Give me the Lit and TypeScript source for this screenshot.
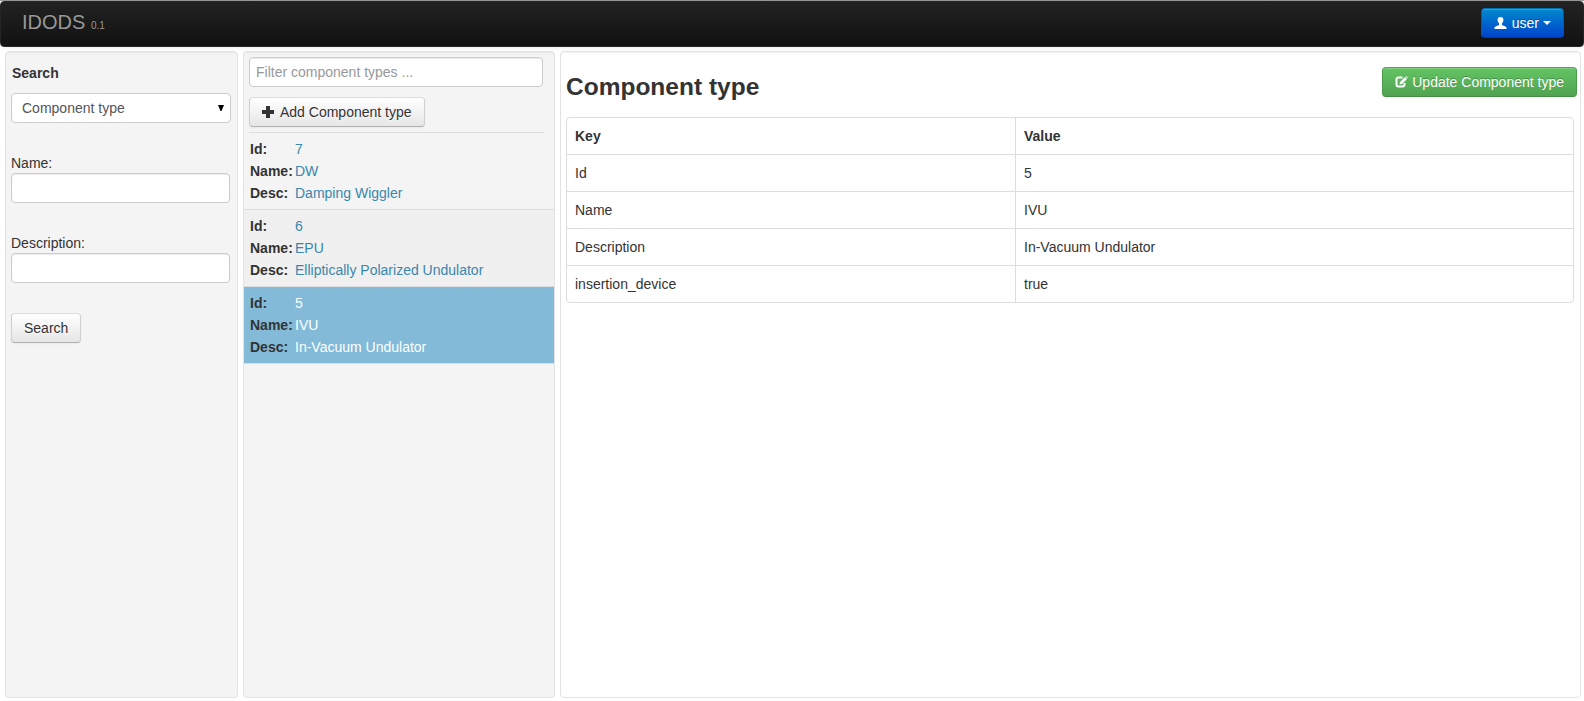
import { LitElement, html, css, svg } from "lit";
import { customElement, state } from "lit/decorators.js";

interface ComponentType {
  id: number;
  name: string;
  desc: string;
}

const TYPES: ComponentType[] = [
  { id: 7, name: "DW", desc: "Damping Wiggler" },
  { id: 6, name: "EPU", desc: "Elliptically Polarized Undulator" },
  { id: 5, name: "IVU", desc: "In-Vacuum Undulator" },
];

const plusIcon = svg`<path fill="#333" d="M4 0h4v4h4v4H8v4H4V8H0V4h4z"/>`;

@customElement("app-root")
export class AppRoot extends LitElement {
  @state() private selected = 5;

  static styles = css`
    :host {
      display: flex;
      flex-direction: column;
      box-sizing: border-box;
      height: 701px;
      background: #fff;
      color: #333;
      font: 14px/20px "Liberation Sans", Arial, sans-serif;
    }
    * { box-sizing: border-box; }
    .topline { height: 1px; background: #999; flex: none; }
    .navbar {
      flex: none;
      display: flex;
      align-items: flex-start;
      justify-content: space-between;
      height: 46px;
      padding: 6px 19px 0 21px;
      border: 1px solid #252525;
      border-radius: 4px;
      background: linear-gradient(#222, #111);
      box-shadow: 0 1px 4px rgba(0, 0, 0, 0.07);
    }
    .brand {
      font-size: 20px;
      line-height: 20px;
      padding-top: 4px;
      color: #999;
      text-shadow: 0 -1px 0 rgba(0, 0, 0, 0.25);
    }
    .brand small { font-size: 10px; }
    .btn {
      display: inline-flex;
      align-items: center;
      height: 30px;
      padding: 0 12px;
      font: inherit;
      color: #333;
      border: 1px solid;
      border-color: #dcdcdc #cfcfcf #b3b3b3;
      border-radius: 4px;
      background: linear-gradient(#fff, #e6e6e6);
      text-shadow: 0 1px 1px rgba(255, 255, 255, 0.75);
      box-shadow: inset 0 1px 0 rgba(255, 255, 255, 0.2), 0 1px 2px rgba(0, 0, 0, 0.05);
      white-space: nowrap;
    }
    .btn svg { display: block; flex: none; }
    .primary, .success {
      color: #fff;
      text-shadow: 0 -1px 0 rgba(0, 0, 0, 0.25);
    }
    .primary {
      background: linear-gradient(#08c, #04c);
      border-color: #0370b4 #0355b4 #003aa8;
    }
    .primary .caret { margin-left: 4px; }
    .primary .person { margin-right: 5px; }
    .success {
      background: linear-gradient(#62c462, #51a351);
      border-color: #53a853 #4a9a4a #458b45;
    }
    .success svg { margin-right: 4px; }
    .add svg { margin-right: 6px; }
    .columns {
      flex: none;
      display: grid;
      grid-template-columns: 233px 312px 1021px;
      gap: 5px;
      height: 647px;
      margin: 4px 0 0 5px;
    }
    .panel {
      border: 1px solid #e3e3e3;
      border-radius: 4px;
      background: #f4f4f4;
      box-shadow: inset 0 1px 1px rgba(0, 0, 0, 0.05);
      min-width: 0;
    }
    .white { background: #fff; padding: 0 4px 0 5px; }
    .search { padding: 11px 6px 0 5px; display: flex; flex-direction: column; align-items: flex-start; }
    .title { font-weight: bold; padding-left: 1px; }
    .field {
      display: flex;
      align-items: center;
      height: 30px;
      width: 219px;
      border: 1px solid #ccc;
      border-radius: 4px;
      background: #fff;
      padding: 4px 6px;
      font: inherit;
      color: #555;
      outline: none;
      box-shadow: inset 0 1px 1px rgba(0, 0, 0, 0.075);
    }
    .field::placeholder { color: #999; opacity: 1; }
    .select { justify-content: space-between; width: 220px; margin: 10px 0 30px; padding: 0 6px 0 10px; box-shadow: none; }
    .label { margin-bottom: 0; }
    .name { margin-bottom: 30px; }
    .description { margin-bottom: 30px; }
    .tools { display: flex; flex-direction: column; align-items: flex-start; gap: 10px; margin: 0 10px 0 5px; padding: 5px 0; border-bottom: 1px solid #ddd; }
    .filter { width: 294px; }
    .item {
      display: grid;
      grid-template-columns: 45px 1fr;
      grid-auto-rows: 22px;
      line-height: 22px;
      height: 77px;
      padding: 5px 6px;
      border-bottom: 1px solid #ddd;
      color: #3a87ad;
      cursor: pointer;
    }
    .item b { color: #333; }
    .item.alt { background: #f0f0f0; }
    .item.active { background: #82bad8; color: #fff; }
    .head { display: flex; justify-content: space-between; height: 65px; margin-right: -1px; }
    h1 { margin: 15px 0 0; font-size: 24.5px; line-height: 40px; }
    .success { margin-top: 15px; }
    .table {
      border: 1px solid #ddd;
      border-radius: 4px;
      border-spacing: 0;
      border-collapse: separate;
      width: 1008px;
      table-layout: fixed;
    }
    th, td { text-align: left; padding: 8px; height: 37px; border-top: 1px solid #ddd; }
    tr:first-child th { border-top: 0; height: 36px; }
    th + th, td + td { border-left: 1px solid #ddd; }
    .key { width: 448px; }
  `;

  private renderItem(t: ComponentType, i: number) {
    const cls = t.id === this.selected ? "item active" : i % 2 ? "item alt" : "item";
    return html`<div class=${cls} @click=${() => (this.selected = t.id)}>
      <b>Id:</b><span>${t.id}</span>
      <b>Name:</b><span>${t.name}</span>
      <b>Desc:</b><span>${t.desc}</span>
    </div>`;
  }

  render() {
    const current = TYPES.find((t) => t.id === this.selected)!;
    const rows = [
      ["Id", current.id],
      ["Name", current.name],
      ["Description", current.desc],
      ["insertion_device", "true"],
    ];
    return html`
      <div class="topline"></div>
      <header class="navbar">
        <div class="brand">IDODS <small>0.1</small></div>
        <button class="btn primary">
          <svg class="person" width="13" height="12" viewBox="0 0 13 12"><path fill="#fff" d="M6.500 0C8.500 0 9.500 1.200 9.400 3C9.300 4.700 8.600 5.600 8 6.400V8C9 8.900 12 9.300 12.500 10.300V12H.5V10.300C1 9.300 4 8.900 5 8V6.400C4.400 5.600 3.700 4.700 3.600 3C3.500 1.200 4.500 0 6.500 0z"/></svg>
          user
          <svg class="caret" width="8" height="4" viewBox="0 0 8 4"><path fill="#fff" d="M0 0h8L4 4z"/></svg>
        </button>
      </header>
      <main class="columns">
        <section class="panel search">
          <div class="title">Search</div>
          <div class="field select">
            <span>Component type</span>
            <svg width="6" height="6" viewBox="0 0 6 6"><path fill="#000" d="M0 0h6L3.500 6h-1z"/></svg>
          </div>
          <label class="label">Name:</label>
          <input class="field name" />
          <label class="label">Description:</label>
          <input class="field description" />
          <button class="btn">Search</button>
        </section>
        <section class="panel">
          <div class="tools">
            <input class="field filter" placeholder="Filter component types ..." />
            <button class="btn add">
              <svg width="12" height="12" viewBox="0 0 12 12">${plusIcon}</svg>
              Add Component type
            </button>
          </div>
          ${TYPES.map((t, i) => this.renderItem(t, i))}
        </section>
        <section class="panel white">
          <div class="head">
            <h1>Component type</h1>
            <button class="btn success">
              <svg width="13" height="12" viewBox="0 0 13 12"><path fill="none" stroke="#fff" stroke-width="2" d="M7.500 1.500H3.500Q1.500 1.500 1.500 3.500V8.500Q1.500 10.500 3.500 10.500H7.500Q9.500 10.500 9.500 8.500V7"/><path fill="#fff" d="M10 1L12 3L7 8L4.500 8.500L5 6zM10.600.4L11.300 0L12.800 1.500L12.400 2.200z"/></svg>
              Update Component type
            </button>
          </div>
          <table class="table">
            <tr><th class="key">Key</th><th>Value</th></tr>
            ${rows.map(([k, v]) => html`<tr><td>${k}</td><td>${v}</td></tr>`)}
          </table>
        </section>
      </main>
    `;
  }
}
